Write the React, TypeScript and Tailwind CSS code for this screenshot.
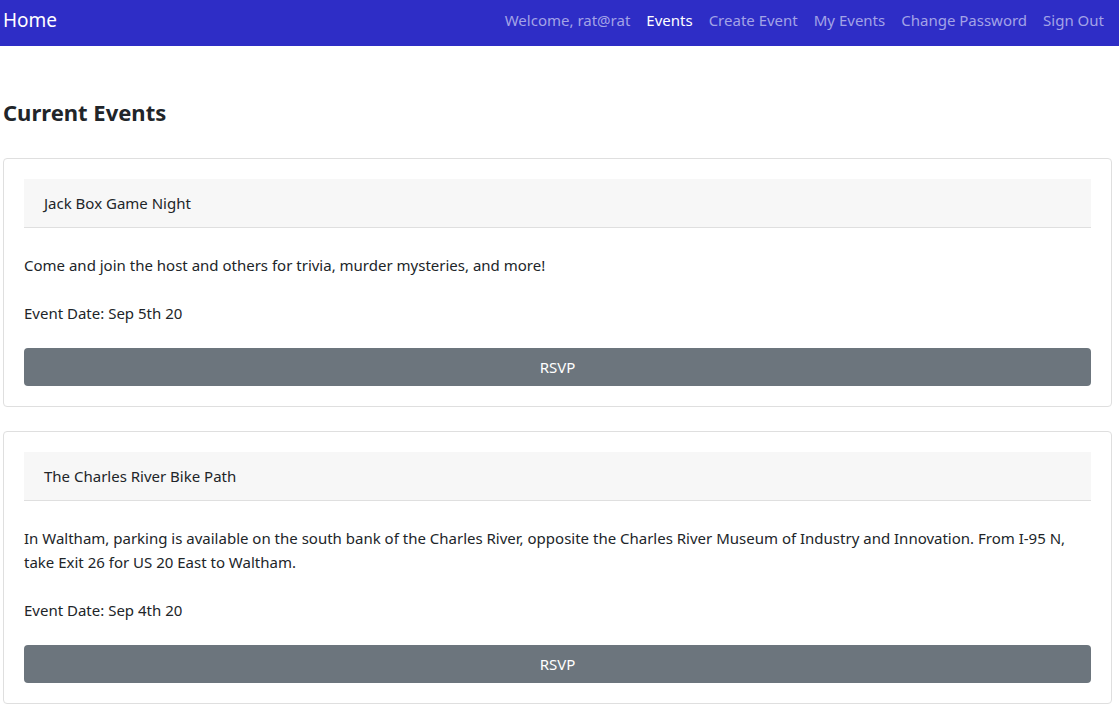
import React from "react";

const events = [
  {
    title: "Jack Box Game Night",
    desc: "Come and join the host and others for trivia, murder mysteries, and more!",
    date: "Sep 5th 20",
  },
  {
    title: "The Charles River Bike Path",
    desc: "In Waltham, parking is available on the south bank of the Charles River, opposite the Charles River Museum of Industry and Innovation. From I-95 N, take Exit 26 for US 20 East to Waltham.",
    date: "Sep 4th 20",
  },
];

export default function App() {
  return (
    <div
      className="min-h-screen bg-white text-[#212529]"
      style={{ fontFamily: '"Noto Sans", "Open Sans", sans-serif' }}
    >
      <nav className="h-[46px] bg-[#2e2dc6] flex items-center justify-between pl-[3px] pr-[7px] pb-[6px]">
        <span className="text-[19px] text-white leading-none">Home</span>
        <div className="flex items-center text-[15px] leading-none">
          {["Welcome, rat@rat", "Events", "Create Event", "My Events", "Change Password", "Sign Out"].map(
            (l) => (
              <span
                key={l}
                className={`px-2 ${l === "Events" ? "text-white" : "text-[#a3a3e6]"}`}
              >
                {l}
              </span>
            )
          )}
        </div>
      </nav>
      <main className="pl-[3px] pr-[7px]">
        <h4 className="mt-[52px] text-[22px] font-bold leading-[29px]">Current Events</h4>
        <div className="mt-[31px] flex flex-col gap-[24px]">
          {events.map((e) => (
            <div key={e.title} className="border border-[#dfdfdf] rounded p-5">
              <div className="bg-[#f7f7f7] border-b border-[#dfdfdf] px-5 py-3 leading-6 text-[15px]">
                {e.title}
              </div>
              <p className="mt-[25px] leading-6 text-[15px]">{e.desc}</p>
              <p className="mt-6 leading-6 text-[15px]">Event Date: {e.date}</p>
              <button className="mt-[23px] w-full h-[38px] rounded bg-[#6c757d] text-white text-[15px]">
                RSVP
              </button>
            </div>
          ))}
        </div>
      </main>
    </div>
  );
}
